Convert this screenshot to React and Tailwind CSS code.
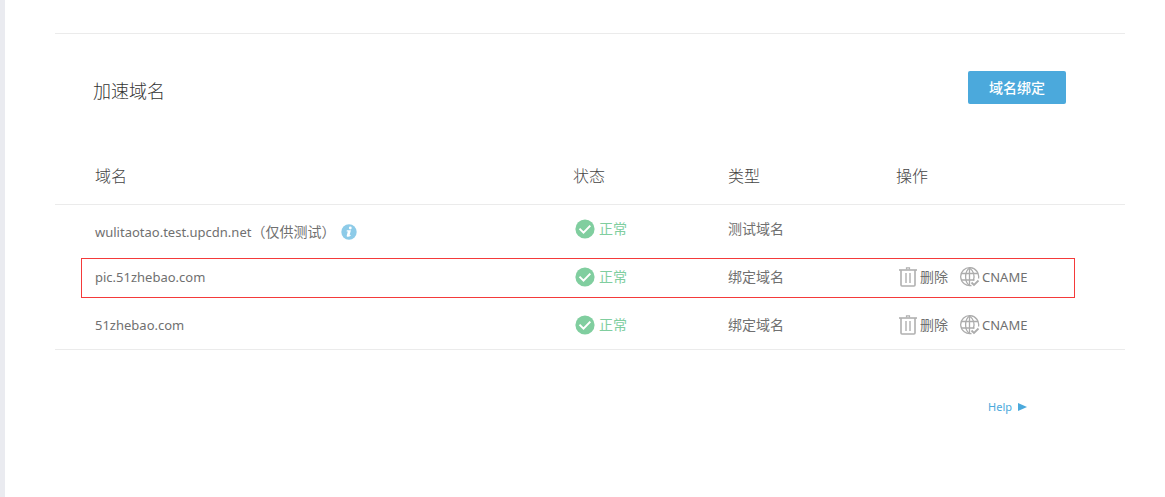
import React from "react"

const domains = [
  { name: "wulitaotao.test.upcdn.net", note: "（仅供测试）", status: "正常", type: "测试域名" },
  { name: "pic.51zhebao.com", status: "正常", type: "绑定域名", editable: true, highlighted: true },
  { name: "51zhebao.com", status: "正常", type: "绑定域名", editable: true },
]

function CheckIcon() {
  return (
    <svg className="h-5 w-5 shrink-0" viewBox="0 0 20 20" fill="none" aria-hidden="true">
      <circle cx="10" cy="10" r="9.6" fill="#80ce9f" />
      <path d="M4.5 9.6l4 4 6.8-7" stroke="#fff" strokeWidth="2" />
    </svg>
  )
}

function InfoIcon() {
  return (
    <svg className="h-4 w-4 shrink-0" viewBox="0 0 16 16" aria-hidden="true">
      <circle cx="8" cy="8" r="7.7" fill="#8dcbe8" />
      <circle cx="9.3" cy="4" r="1.4" fill="#fff" />
      <path d="M5.8 6.3h4.1l-1.3 4.9 1.2-.4-.2.9c-.8.7-1.7 1-2.6 1-1 0-1.5-.5-1.2-1.5l1-3.800h-1.200z" fill="#fff" />
    </svg>
  )
}

function TrashIcon() {
  return (
    <svg className="h-5 w-5 shrink-0" viewBox="0 0 20 20" fill="none" stroke="#b0b0b0" aria-hidden="true">
      <path d="M1 3h18" strokeWidth="1.6" />
      <path d="M8.500 2.500V.8h3v1.700" strokeWidth="1.2" />
      <path d="M3 3v15q0 1 1 1h12q1 0 1-1V3" strokeWidth="1.6" />
      <path d="M8 6v10M12 6v10" strokeWidth="1.4" />
    </svg>
  )
}

function GlobeCheckIcon() {
  return (
    <svg className="h-5 w-5 shrink-0" viewBox="0 0 20 20" fill="none" stroke="#acacac" strokeWidth="1.3" aria-hidden="true">
      <path d="M18.5 11.5A9 9 0 1 0 11.5 18.5" />
      <path d="M9.5 1v17.500M1.500 6.500h16.500M1.500 13h13" />
      <path d="M9.500 1C4.300 4.500 4.300 15 9.500 18.500M9.500 1c3.800 2.800 5.400 7.500 3.900 12.500" />
      <path d="M11.500 15.500l2.500 2.500 4.500-4.500" strokeWidth="1.8" />
    </svg>
  )
}

function DomainRow({ domain }) {
  return (
    <tr className="relative h-12">
      <td className="pl-10">
        <div className={domain.note ? "flex items-center pt-1.5" : "flex items-center"}>
          <span className="text-[13px]">{domain.name}</span>
          {domain.note && (
            <>
              <span>{domain.note}</span>
              <span className="ml-1.5"><InfoIcon /></span>
            </>
          )}
        </div>
        {domain.highlighted && (
          <span className="pointer-events-none absolute top-[5px] right-[50px] left-[26px] h-10 border border-[#f43a3a]" />
        )}
      </td>
      <td>
        <span className="flex items-center gap-1 pl-0.5 text-[#80ce9f]">
          <CheckIcon />
          {domain.status}
        </span>
      </td>
      <td>{domain.type}</td>
      <td>
        {domain.editable && (
          <div className="flex items-center gap-3 pl-0.5">
            <button type="button" className="flex items-center gap-0.5">
              <TrashIcon />
              删除
            </button>
            <button type="button" className="flex items-center gap-0.5 text-[13px]">
              <GlobeCheckIcon />
              CNAME
            </button>
          </div>
        )}
      </td>
    </tr>
  )
}

export default function App() {
  return (
    <div className="min-h-screen border-l-[5px] border-[#eaebf0] bg-white pt-[33px] pr-10 pl-[50px] font-['Noto_Sans','Noto_Sans_CJK_SC',sans-serif] text-sm text-[#707070]">
      <section className="border-t border-[#ebebeb] pt-[37px]">
        <header className="flex items-end justify-between pr-[59px] pl-[38px]">
          <h2 className="text-lg leading-[26px] font-light text-[#333]">加速域名</h2>
          <button type="button" className="h-[33px] w-[98px] rounded-xs bg-[#4ba9dc] font-medium text-white">
            域名绑定
          </button>
        </header>

        <table className="mt-11 w-full table-fixed border-separate border-spacing-0 border-b border-[#ebebeb] text-left">
          <thead>
            <tr className="h-[57px] text-base text-[#444]">
              <th className="border-b border-[#ebebeb] pl-10 font-light">域名</th>
              <th className="w-[155px] border-b border-[#ebebeb] font-light">状态</th>
              <th className="w-[168px] border-b border-[#ebebeb] font-light">类型</th>
              <th className="w-[229px] border-b border-[#ebebeb] font-light">操作</th>
            </tr>
          </thead>
          <tbody>
            {domains.map((domain) => (
              <DomainRow key={domain.name} domain={domain} />
            ))}
          </tbody>
        </table>

        <footer className="flex justify-end pt-12 pr-[98px]">
          <a href="#help" className="flex items-center gap-1.5 text-[11px] leading-[18px] text-[#4ba9dc]">
            Help
            <svg className="h-2 w-[9px]" viewBox="0 0 9 8" fill="currentColor" aria-hidden="true">
              <path d="M0 0l9 4-9 4z" />
            </svg>
          </a>
        </footer>
      </section>
    </div>
  )
}
